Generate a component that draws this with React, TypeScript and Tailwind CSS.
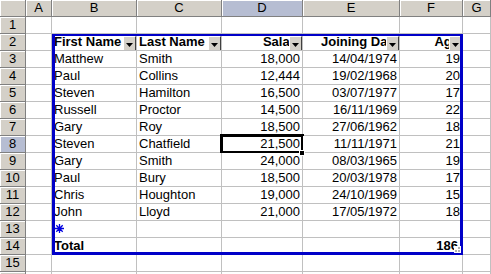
import React from "react";

const colWidths = [26, 26, 85, 85, 81, 97, 63, 28];
const colLetters = ["A", "B", "C", "D", "E", "F", "G"];

type Row = [string, string, string, string, string];

const people: Row[] = [
  ["Matthew", "Smith", "18,000", "14/04/1974", "19"],
  ["Paul", "Collins", "12,444", "19/02/1968", "20"],
  ["Steven", "Hamilton", "16,500", "03/07/1977", "17"],
  ["Russell", "Proctor", "14,500", "16/11/1969", "22"],
  ["Gary", "Roy", "18,500", "27/06/1962", "18"],
  ["Steven", "Chatfield", "21,500", "11/11/1971", "21"],
  ["Gary", "Smith", "24,000", "08/03/1965", "19"],
  ["Paul", "Bury", "18,500", "20/03/1978", "17"],
  ["Chris", "Houghton", "19,000", "24/10/1969", "15"],
  ["John", "Lloyd", "21,000", "17/05/1972", "18"],
];

const headers = [
  { text: "First Name", right: false, pad: "" },
  { text: "Last Name", right: false, pad: "" },
  { text: "Salary", right: true, pad: "!pr-0" },
  { text: "Joining Date", right: true, pad: "!pr-0" },
  { text: "Age", right: true, pad: "!pr-[3px]" },
];

function DropButton() {
  return (
    <div className="absolute right-0 top-[2px] w-[13px] h-[15px] bg-[#d4d0c8] border border-t-white border-l-white border-r-[#404040] border-b-[#404040] flex items-center justify-center">
      <svg width="7" height="4" viewBox="0 0 7 4" className="translate-y-[1px]">
        <path d="M0 0h7L3.5 4z" fill="#000" />
      </svg>
    </div>
  );
}

function HeadCell({ children, active }: { children?: React.ReactNode; active?: boolean }) {
  return (
    <div
      className={
        "flex items-center justify-center border-r border-b border-r-[#808080] border-b-[#808080] shadow-[inset_1px_1px_0_#ffffff] text-[13px] text-black " +
        (active ? "bg-[#b6bdd2]" : "bg-[#d4d0c8]")
      }
    >
      {children}
    </div>
  );
}

function Cell({
  children,
  right,
  bold,
  className,
}: {
  children?: React.ReactNode;
  right?: boolean;
  bold?: boolean;
  className?: string;
}) {
  return (
    <div
      className={
        "relative flex items-end overflow-hidden whitespace-nowrap border-r border-b border-[#c0c0c0] bg-white px-[2px] text-[13px] leading-[16px] text-black " +
        (right ? "justify-end " : "justify-start ") +
        (bold ? "font-bold " : "") +
        (className ?? "")
      }
    >
      {children}
    </div>
  );
}

function NewRowStar() {
  return (
    <svg width="9" height="9" viewBox="0 0 9 9" className="mb-[4px] ml-[1px]">
      <g stroke="#0000e0" strokeWidth="1.3">
        <path d="M4.5 0v9M0 4.5h9M1.3 1.3l6.4 6.4M7.7 1.3l-6.4 6.4" />
      </g>
    </svg>
  );
}

export default function App() {
  const rows = Array.from({ length: 16 }, (_, i) => i + 1);

  const cellFor = (r: number, c: number) => {
    // c: 0=A .. 6=G
    if (r === 2 && c >= 1 && c <= 5) {
      const h = headers[c - 1];
      return (
        <Cell key={c} right={h.right} bold className={h.pad}>
          <span>{h.text}</span>
          <DropButton />
        </Cell>
      );
    }
    if (r >= 3 && r <= 12 && c >= 1 && c <= 5) {
      const v = people[r - 3][c - 1];
      const right = c >= 3;
      if (r === 8 && c === 3) {
        return (
          <Cell key={c} right className="!overflow-visible">
            {v}
            <div className="pointer-events-none absolute -left-[2px] -top-[2px] w-[84px] h-[20px] border-[3px] border-black" />
            <div className="absolute -right-[3px] -bottom-[4px] w-[6px] h-[6px] bg-black border border-white z-10" />
          </Cell>
        );
      }
      return (
        <Cell key={c} right={right}>
          {v}
        </Cell>
      );
    }
    if (r === 13 && c === 1) {
      return (
        <Cell key={c}>
          <NewRowStar />
        </Cell>
      );
    }
    if (r === 14 && c === 1) {
      return (
        <Cell key={c} bold>
          Total
        </Cell>
      );
    }
    if (r === 14 && c === 5) {
      return (
        <Cell key={c} right bold>
          <span className="pr-[2px]">186</span>
        </Cell>
      );
    }
    return <Cell key={c} />;
  };

  return (
    <div
      className="relative w-[491px] h-[274px] overflow-hidden bg-white"
      style={{ fontFamily: '"Liberation Sans", Arial, sans-serif' }}
    >
      <div className="grid grid-cols-[26px_26px_85px_85px_81px_97px_63px_28px] auto-rows-[17px]">
        <HeadCell />
        {colLetters.map((l) => (
          <HeadCell key={l} active={l === "D"}>
            {l}
          </HeadCell>
        ))}
        {rows.map((r) => (
          <React.Fragment key={r}>
            <HeadCell active={r === 8}>{r <= 15 ? r : null}</HeadCell>
            {colWidths.slice(1).map((_, c) => cellFor(r, c))}
          </React.Fragment>
        ))}
      </div>

      {/* list frame */}
      <div className="pointer-events-none absolute left-[52px] top-[34px] w-[411px] h-[221px] border-[3px] border-t-2 border-[#0000c8]">
        <svg
          className="absolute right-[-1px] bottom-[-1px]"
          width="7"
          height="7"
          viewBox="0 0 7 7"
        >
          <rect x="0" y="0" width="7" height="7" fill="#ffffff" />
          <rect x="4" y="1" width="2" height="2" fill="#b0b0b0" />
          <rect x="1" y="4" width="2" height="2" fill="#b0b0b0" />
          <rect x="4" y="4" width="2" height="2" fill="#b0b0b0" />
        </svg>
      </div>
    </div>
  );
}
